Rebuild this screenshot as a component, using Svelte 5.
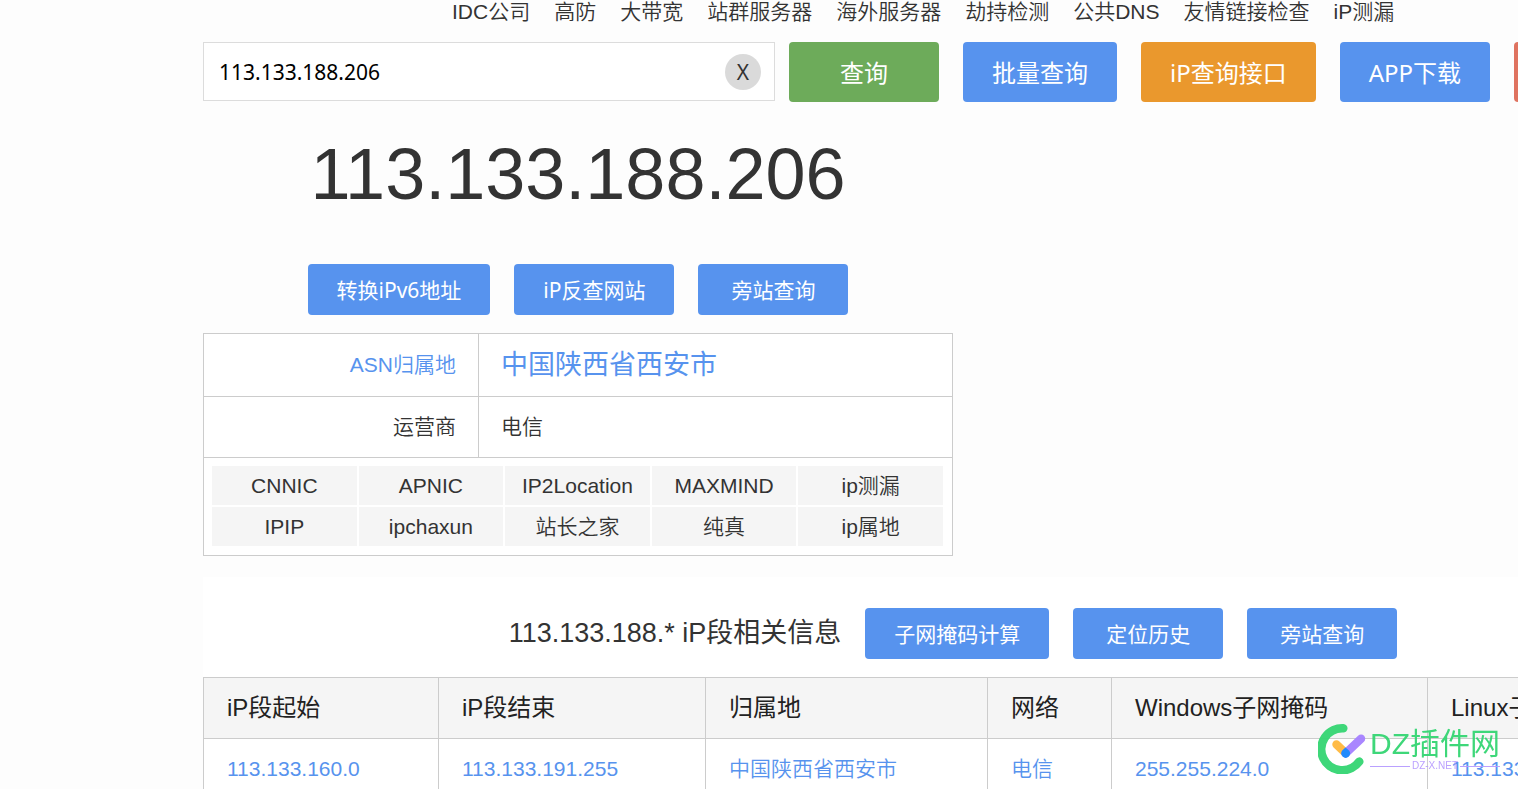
<script lang="ts">
  let query = $state('113.133.188.206');

  const ip = '113.133.188.206';
  const nav = ['IDC公司', '高防', '大带宽', '站群服务器', '海外服务器', '劫持检测', '公共DNS', '友情链接检查', 'iP测漏'];
  const ipTools = ['转换iPv6地址', 'iP反查网站', '旁站查询'];
  const sources = ['CNNIC', 'APNIC', 'IP2Location', 'MAXMIND', 'ip测漏', 'IPIP', 'ipchaxun', '站长之家', '纯真', 'ip属地'];
  const rangeTools = ['子网掩码计算', '定位历史', '旁站查询'];
  const heads = ['iP段起始', 'iP段结束', '归属地', '网络', 'Windows子网掩码', 'Linux子网掩码'];
  const rows = [['113.133.160.0', '113.133.191.255', '中国陕西省西安市', '电信', '255.255.224.0', '113.133.160.0/19']];
</script>

<div class="page">
  <nav>
    {#each nav as item}
      <a href="#top">{item}</a>
    {/each}
  </nav>

  <form class="search" onsubmit={(event) => event.preventDefault()}>
    <div class="field">
      <input type="text" aria-label="iP地址" bind:value={query} />
      <button type="button" class="clear" onclick={() => (query = '')}>X</button>
    </div>
    <div class="actions">
      <button class="btn big green">查询</button>
      <button type="button" class="btn big">批量查询</button>
      <button type="button" class="btn big orange">iP查询接口</button>
      <button type="button" class="btn big">APP下载</button>
      <button type="button" class="btn big red" aria-label="更多"></button>
    </div>
  </form>

  <section class="result">
    <h1>{ip}</h1>
    <div class="tools">
      {#each ipTools as tool}
        <button type="button" class="btn">{tool}</button>
      {/each}
    </div>
    <table class="info">
      <tbody>
        <tr>
          <th scope="row"><a href="#asn">ASN归属地</a></th>
          <td class="place"><a href="#place">中国陕西省西安市</a></td>
        </tr>
        <tr>
          <th scope="row">运营商</th>
          <td>电信</td>
        </tr>
        <tr>
          <td colspan="2" class="source-cell">
            <div class="sources">
              {#each sources as source}
                <a href="#source">{source}</a>
              {/each}
            </div>
          </td>
        </tr>
      </tbody>
    </table>
  </section>

  <section class="range">
    <div class="range-head">
      <h2>113.133.188.* iP段相关信息</h2>
      {#each rangeTools as tool}
        <button type="button" class="btn">{tool}</button>
      {/each}
    </div>
    <table class="segments">
      <colgroup>
        <col class="start" />
        <col class="end" />
        <col class="area" />
        <col class="net" />
        <col class="mask" />
        <col />
      </colgroup>
      <thead>
        <tr>
          {#each heads as head}
            <th scope="col">{head}</th>
          {/each}
        </tr>
      </thead>
      <tbody>
        {#each rows as row}
          <tr>
            {#each row as cell}
              <td><a href="#range">{cell}</a></td>
            {/each}
          </tr>
        {/each}
      </tbody>
    </table>
  </section>
</div>

<div class="mark">
  <svg width="50" height="50" viewBox="0 0 50 50" fill="none" stroke-linecap="round" aria-hidden="true">
    <path d="M25.3 4.3A21 21 0 1 0 41.3 37.6" stroke="#34d572" stroke-width="8.5" />
    <path d="M18.5 20.5L27.5 29" stroke="#ffb83d" stroke-width="8.5" />
    <path d="M43 14.7L27.7 29.3" stroke="#a580ff" stroke-width="8.5" />
    <path d="M24.3 26.6L27.5 23.6L31 26.6A4.5 4.5 0 0 1 30.7 32.6A4.5 4.5 0 0 1 24.7 32.6A4.5 4.5 0 0 1 24.3 26.6Z" fill="#1684fc" />
  </svg>
  <div class="mark-text">
    <span class="mark-name">DZ插件网</span>
    <span class="mark-url">DZ-X.NET</span>
  </div>
</div>

<style>
  :global(body) {
    overflow: hidden;
    background: #fdfdfd;
    color: #333;
    font-family: 'Liberation Sans', 'Noto Sans CJK SC', sans-serif;
    font-size: 21px;
    font-weight: 350;
  }

  .page {
    width: 1500px;
    margin-left: 203px;
  }

  a {
    color: #5793ee;
    text-decoration: none;
  }

  button,
  input {
    font: inherit;
  }

  nav {
    display: flex;
    gap: 24px;
    height: 42px;
    padding-left: 249px;
    line-height: 24px;
    white-space: nowrap;
  }

  nav a {
    color: #333;
  }

  .search {
    display: flex;
    gap: 14px;
  }

  .field {
    display: flex;
    align-items: center;
    box-sizing: border-box;
    width: 572px;
    height: 59px;
    padding: 0 13px 0 15px;
    border: 1px solid #dcdcdc;
    background: #fff;
  }

  input {
    flex: 1;
    min-width: 0;
    padding: 0;
    border: 0;
    outline: 0;
    background: none;
    color: #000;
    font-family: 'Noto Sans', sans-serif;
    font-size: 21px;
    font-weight: 400;
  }

  .clear {
    width: 36px;
    height: 36px;
    padding: 0;
    border: 0;
    border-radius: 50%;
    background: #dadada;
    color: #333;
    font-family: 'Noto Sans', sans-serif;
    font-weight: 400;
    line-height: 36px;
    cursor: pointer;
  }

  .actions {
    display: flex;
    gap: 24px;
  }

  .btn {
    flex: none;
    min-width: 150px;
    height: 51px;
    padding: 0 29px 2px;
    border: 0;
    border-radius: 4px;
    background: #5793ee;
    color: #fff;
    font-family: 'Noto Sans', 'Noto Sans CJK SC', sans-serif;
    font-weight: 400;
    white-space: nowrap;
    cursor: pointer;
  }

  .big {
    height: 60px;
    font-size: 24px;
  }

  .green {
    background: #6dab5a;
  }

  .orange {
    background: #ea982d;
  }

  .red {
    background: #df7360;
  }

  .result {
    width: 750px;
  }

  h1,
  h2 {
    margin: 0;
    font-weight: 400;
  }

  h1 {
    padding: 27px 0 45px;
    font-size: 72px;
    line-height: 90px;
    text-align: center;
  }

  .tools {
    display: flex;
    justify-content: center;
    gap: 24px;
    margin-bottom: 18px;
  }

  table {
    width: 100%;
    border-collapse: collapse;
    table-layout: fixed;
    background: #fff;
  }

  th,
  td {
    box-sizing: border-box;
    height: 61px;
    padding: 0 22px;
    border: 1px solid #ccc;
    font-weight: 350;
    text-align: left;
    line-height: 30px;
    white-space: nowrap;
  }

  .info th {
    width: 275px;
    text-align: right;
  }

  .info tr:first-child > * {
    height: 63px;
  }

  .info .place {
    font-size: 27px;
    font-weight: 400;
  }

  .info .source-cell {
    padding: 8px 9px 9px 8px;
  }

  .sources {
    display: grid;
    grid-template-columns: repeat(5, 1fr);
    gap: 2px;
    line-height: 39px;
    text-align: center;
  }

  .sources a {
    background: #f5f5f5;
    color: #333;
  }

  .range {
    margin-top: 21px;
    background: #fff;
  }

  .range-head {
    display: flex;
    justify-content: center;
    align-items: center;
    gap: 24px;
    padding: 31px 0 18px;
  }

  h2 {
    font-size: 27px;
    line-height: 51px;
  }

  .segments th,
  .segments td {
    padding: 0 23px;
  }

  .segments th {
    background: #f5f5f5;
    color: #222;
    font-size: 24px;
    font-weight: 400;
  }

  .start {
    width: 235px;
  }

  .end {
    width: 267px;
  }

  .area {
    width: 282px;
  }

  .net {
    width: 124px;
  }

  .mask {
    width: 316px;
  }

  .mark {
    position: fixed;
    right: 18px;
    bottom: 15px;
    display: flex;
    align-items: center;
    gap: 2px;
    opacity: 0.95;
    pointer-events: none;
  }

  .mark-text {
    display: grid;
    color: #34d572;
  }

  .mark-name {
    font-size: 30px;
    font-weight: 400;
    line-height: 34px;
  }

  .mark-url {
    display: flex;
    align-items: center;
    gap: 2px;
    color: #b79cff;
    font-size: 10px;
    line-height: 10px;
  }

  .mark-url::before,
  .mark-url::after {
    content: '';
    flex: 1;
    height: 1px;
    background: #b79cff;
  }
</style>
